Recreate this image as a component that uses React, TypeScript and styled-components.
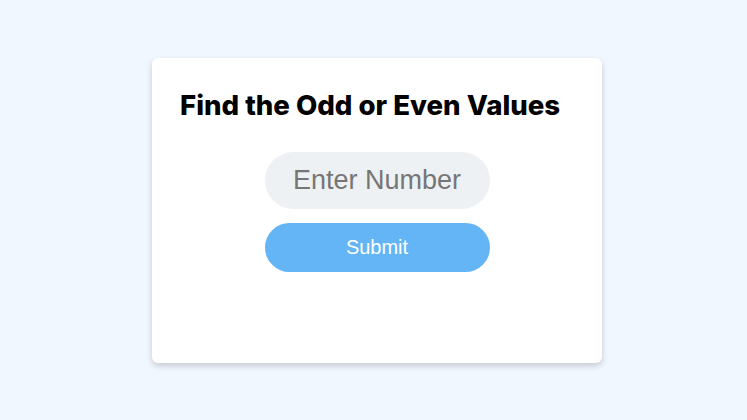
import React from "react";
import styled, { createGlobalStyle } from "styled-components";

const Global = createGlobalStyle`
  html, body { margin: 0; padding: 0; }
  body { background: #f1f7fe; font-family: "Liberation Sans", Arial, sans-serif; }
`;

const Page = styled.div`
  width: 747px;
  height: 420px;
  display: flex;
  justify-content: center;
  padding: 58px 0 0 7px;
  box-sizing: border-box;
`;

const Card = styled.div`
  width: 450px;
  height: 305px;
  box-sizing: border-box;
  background: #fff;
  border-radius: 6px;
  box-shadow: 0 3px 6px rgba(0, 0, 0, 0.18);
  padding: 30px 28px;
  display: flex;
  flex-direction: column;
  align-items: stretch;
`;

const Title = styled.h1`
  margin: 0 0 30px;
  font-family: Inter, "Noto Sans", sans-serif;
  font-weight: 800;
  font-size: 27.6px;
  line-height: 34px;
  color: #000;
  white-space: nowrap;
`;

const Form = styled.div`
  display: flex;
  flex-direction: column;
  align-items: center;
  gap: 14px;
`;

const Input = styled.input`
  width: 225px;
  height: 57px;
  box-sizing: border-box;
  border: none;
  outline: none;
  border-radius: 29px;
  background: #edf1f4;
  font-family: "Liberation Sans", Arial, sans-serif;
  font-size: 27px;
  text-align: center;
  color: #333;
  &::placeholder { color: #767676; }
`;

const Button = styled.button`
  width: 225px;
  height: 49px;
  border: none;
  border-radius: 25px;
  background: #64b5f6;
  color: #fff;
  font-family: "Liberation Sans", Arial, sans-serif;
  font-size: 20px;
  cursor: pointer;
`;

export default function App() {
  return (
    <>
      <Global />
      <Page>
        <Card>
          <Title>Find the Odd or Even Values</Title>
          <Form>
            <Input placeholder="Enter Number" />
            <Button>Submit</Button>
          </Form>
        </Card>
      </Page>
    </>
  );
}
